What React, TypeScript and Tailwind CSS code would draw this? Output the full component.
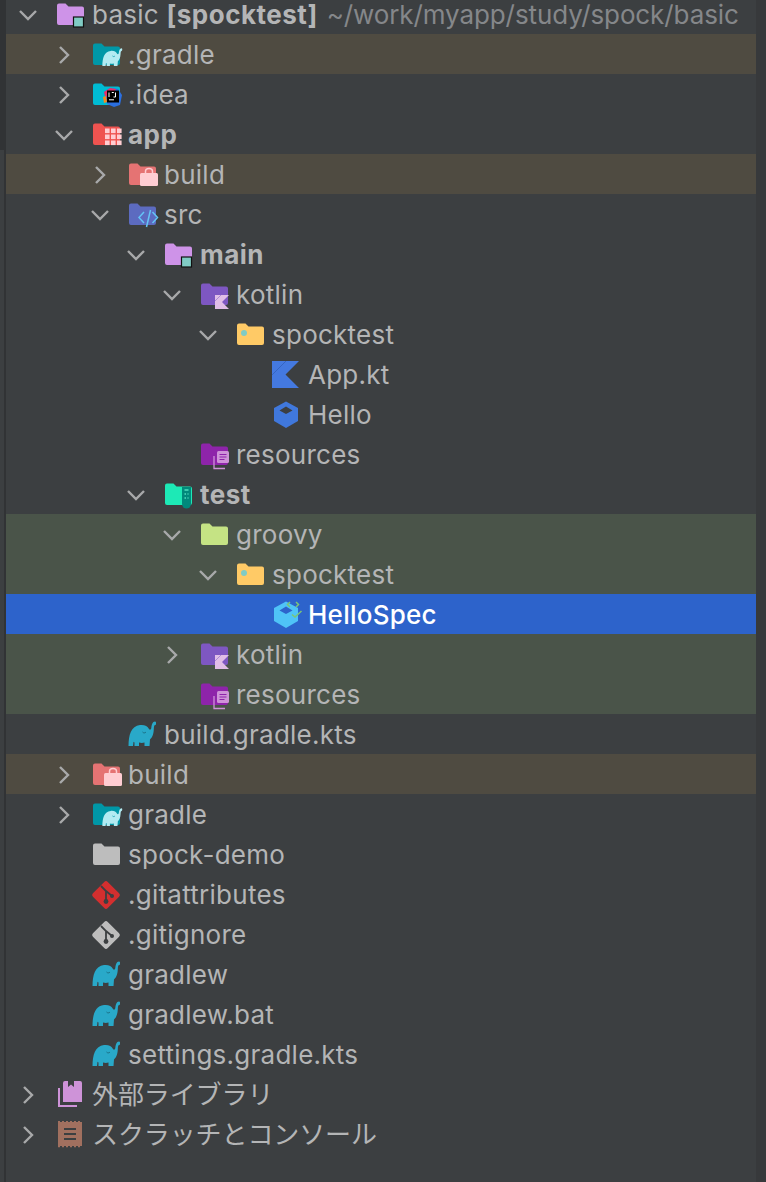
import type { ReactNode } from "react";

/* Project tool window tree */

const BG = "#3c3f41";
const FOLDER = "M1 4.5a2 2 0 0 1 2-2h6.5l3 3H26a2 2 0 0 1 2 2V22a2 2 0 0 1-2 2H3a2 2 0 0 1-2-2z";
const ELEPHANT =
  "M.5 25C.5 14 3 5 12 4c4.500-.5 7.500 1 9 4 .8 1.200 2 .8 2.300-1 .4-3.500 1.200-6.500 3.700-6.500 1.500 0 1.500 3 .3 3.500-1.300 0-1.300 1.500-1.500 4.500-.3 5.500-2 8.500-3.800 10l-.5 6.500h-5v-3.500c-2 .5-3.500.5-5.500 0V25H6.500v-3.500l-1-.7-.5 4.200z";

function Folder({ color, children }: { color: string; children?: ReactNode }) {
  return (
    <svg width="28" height="28" viewBox="0 0 28 28" className="overflow-visible">
      <path d={FOLDER} fill={color} />
      {children}
    </svg>
  );
}

function Elephant({ color, eye }: { color: string; eye: string }) {
  return (
    <>
      <path d={ELEPHANT} fill={color} />
      <path d="M14.500 11c1 1.200 2.500 1.200 3.500 0" fill="none" stroke={eye} strokeWidth="1" />
    </>
  );
}

function ModuleBadge() {
  return <rect x="17.5" y="16" width="10" height="10" fill="#80cbc4" stroke="#111" strokeWidth="1.2" />;
}

function KotlinBadge() {
  return (
    <>
      <path d="M15 14h14l-7 7 7 7H15z" fill="#e1bee7" />
      <path d="M21 14l-6 6" stroke="#9575cd" strokeWidth=".7" />
    </>
  );
}

function DocsBadge() {
  return (
    <>
      <path d="M14 15v12.5h11" fill="none" stroke="#ce93d8" strokeWidth="1.3" />
      <rect x="17" y="10" width="12" height="12" rx="1.5" fill="#ce93d8" />
      <path d="M19.5 13.5h7M19.5 16h7M19.5 18.5h5" stroke="#8e24aa" strokeWidth="1.2" />
    </>
  );
}

function BagBadge() {
  return (
    <>
      <path d="M17.5 12V10.5a3.5 3 0 0 1 7 0V12" fill="none" stroke="#ffcdd2" strokeWidth="1.5" />
      <rect x="12" y="12" width="18" height="13" rx="1.5" fill="#ffcdd2" />
    </>
  );
}

function Cube({ body, hole, children }: { body: string; hole: string; children?: ReactNode }) {
  return (
    <svg width="28" height="28" viewBox="0 0 28 28" className="overflow-visible">
      <path d="M14 .5L26 7v13l-12 7-12-7V7z" fill={body} />
      <path d="M14 5.5l6.500 4-6.500 3.500-6.500-3.500z" fill={hole} />
      {children}
    </svg>
  );
}

function GitIcon({ color }: { color: string }) {
  return (
    <svg width="28" height="28" viewBox="0 0 28 28" className="overflow-visible">
      <rect x="3.500" y="3.500" width="21" height="21" rx="2.500" fill={color} transform="rotate(45 14 14)" />
      <path d="M9 5l5 5v10M14 10l6 5" fill="none" stroke={BG} strokeWidth="1.8" />
      <circle cx="14" cy="20.5" r="2.4" fill={BG} />
      <circle cx="20" cy="15" r="2" fill={BG} />
    </svg>
  );
}

const ICONS: Record<string, ReactNode> = {
  root: <Folder color="#ce93e8"><ModuleBadge /></Folder>,
  gradleDir: (
    <Folder color="#0097a7">
      <g transform="translate(10 7) scale(.72)"><Elephant color="#b2ebf2" eye="#0097a7" /></g>
    </Folder>
  ),
  idea: (
    <Folder color="#00bcd4">
      <path d="M12 11l6-4 8 1 4 6-2 10-6 2-7-3z" fill="#2b6fe0" />
      <path d="M12 11l6-4 6 1-5 9-6-2z" fill="#e8326a" />
      <path d="M11 16l3-1 1 6-3 1z" fill="#f58a1f" />
      <rect x="15" y="9.500" width="12" height="12" fill="#000" />
      <path d="M17 11.500v4.500M19.800 11.500h2M23.500 11.500v4.500h-2M17 18.800h5" stroke="#fff" strokeWidth="1" fill="none" />
    </Folder>
  ),
  app: (
    <Folder color="#ef5350">
      <g fill="#ffcdd2">
        {[0, 1, 2].flatMap((r) =>
          [0, 1, 2].map((c) => <rect key={`${r}${c}`} x={13 + c * 6} y={7.5 + r * 6} width="4.6" height="4.6" />),
        )}
      </g>
    </Folder>
  ),
  build: <Folder color="#e57373"><BagBadge /></Folder>,
  src: (
    <Folder color="#5c6bc0">
      <path d="M16 11l-5 5.500 5 5.500M24.500 11l5 5.500-5 5.500M22.500 9l-4 17" fill="none" stroke="#64c4f6" strokeWidth="1.5" />
    </Folder>
  ),
  kotlin: <Folder color="#7e57c2"><KotlinBadge /></Folder>,
  pkg: <Folder color="#ffca66"><circle cx="8" cy="12" r="3" fill="#80cbc4" /></Folder>,
  kt: (
    <svg width="28" height="28" viewBox="0 0 28 28">
      <path d="M0 0h27L13.500 13.500 27 27H0z" fill="#4479e0" />
      <path d="M14 0L0 14" stroke="#2f5db5" strokeWidth=".7" />
    </svg>
  ),
  cls: <Cube body="#4078dc" hole={BG} />,
  res: <Folder color="#8e24aa"><DocsBadge /></Folder>,
  test: (
    <Folder color="#1de9b6">
      <path d="M18 6h9v17a4.500 4.500 0 0 1-9 0z" fill="#00897b" />
      <path d="M20.500 9h4M20.500 13h1.500M23.500 13h1M20.500 17h1.500M23.500 17h1" stroke="#4fe0c0" strokeWidth="1.4" />
    </Folder>
  ),
  groovy: <Folder color="#c5e384" />,
  spec: (
    <Cube body="#4fc3f7" hole="#2d63cb">
      <path d="M18 1l-2.500 2.500L18 6M24 1l2.500 2.500L24 6M20 13.500l3 2.500 6.500-6" fill="none" stroke="#7cc576" strokeWidth="1.5" />
    </Cube>
  ),
  plain: <Folder color="#bdbdbd" />,
  gitRed: <GitIcon color="#d32f2f" />,
  gitGray: <GitIcon color="#bdbdbd" />,
  gradle: (
    <svg width="28" height="28" viewBox="0 0 28 28">
      <Elephant color="#29a9c9" eye="#1b6f85" />
    </svg>
  ),
  libs: (
    <svg width="28" height="28" viewBox="0 0 28 28">
      <path d="M7 2a2 2 0 0 1 2-2h3v6l3-2.500L18 6V0h6a2 2 0 0 1 2 2v19H7z" fill="#ce93d8" />
      <path d="M3 7v18h18" fill="none" stroke="#ce93d8" strokeWidth="2" />
    </svg>
  ),
  scratch: (
    <svg width="28" height="28" viewBox="0 0 28 28">
      <rect x="2" y="1" width="24" height="24" fill="#a1705f" />
      <path d="M2 .5h24M2 25.500h24" stroke="#a1705f" strokeWidth="1.5" strokeDasharray="2 2" />
      <path d="M8 8h12M8 13h12M8 18h12" stroke={BG} strokeWidth="2" />
    </svg>
  ),
};

type Row = {
  name: string;
  icon: string;
  depth: number;
  open?: boolean;
  bold?: boolean;
  bg?: string;
};

const BROWN = "bg-[#4f4b41]";
const GREEN = "bg-[#4a5449]";

const ROWS: Row[] = [
  { name: ".gradle", icon: "gradleDir", depth: 1, open: false, bg: BROWN },
  { name: ".idea", icon: "idea", depth: 1, open: false },
  { name: "app", icon: "app", depth: 1, open: true, bold: true },
  { name: "build", icon: "build", depth: 2, open: false, bg: BROWN },
  { name: "src", icon: "src", depth: 2, open: true },
  { name: "main", icon: "root", depth: 3, open: true, bold: true },
  { name: "kotlin", icon: "kotlin", depth: 4, open: true },
  { name: "spocktest", icon: "pkg", depth: 5, open: true },
  { name: "App.kt", icon: "kt", depth: 6 },
  { name: "Hello", icon: "cls", depth: 6 },
  { name: "resources", icon: "res", depth: 4 },
  { name: "test", icon: "test", depth: 3, open: true, bold: true },
  { name: "groovy", icon: "groovy", depth: 4, open: true, bg: GREEN },
  { name: "spocktest", icon: "pkg", depth: 5, open: true, bg: GREEN },
  { name: "HelloSpec", icon: "spec", depth: 6, bg: "bg-[#2d63cb] text-white font-medium" },
  { name: "kotlin", icon: "kotlin", depth: 4, open: false, bg: GREEN },
  { name: "resources", icon: "res", depth: 4, bg: GREEN },
  { name: "build.gradle.kts", icon: "gradle", depth: 2 },
  { name: "build", icon: "build", depth: 1, open: false, bg: BROWN },
  { name: "gradle", icon: "gradleDir", depth: 1, open: false },
  { name: "spock-demo", icon: "plain", depth: 1 },
  { name: ".gitattributes", icon: "gitRed", depth: 1 },
  { name: ".gitignore", icon: "gitGray", depth: 1 },
  { name: "gradlew", icon: "gradle", depth: 1 },
  { name: "gradlew.bat", icon: "gradle", depth: 1 },
  { name: "settings.gradle.kts", icon: "gradle", depth: 1 },
  { name: "外部ライブラリ", icon: "libs", depth: 0, open: false },
  { name: "スクラッチとコンソール", icon: "scratch", depth: 0, open: false },
];

const INDENT = ["pl-[10px]", "pl-[46px]", "pl-[82px]", "pl-[118px]", "pl-[154px]", "pl-[190px]", "pl-[226px]"];

function Chevron({ open }: { open?: boolean }) {
  if (open === undefined) return null;
  return (
    <svg width="24" height="24" viewBox="0 0 24 24">
      <path d={open ? "M4 8l8 8 8-8" : "M8 4l8 8-8 8"} fill="none" stroke="#a8a9aa" strokeWidth="2.4" />
    </svg>
  );
}

function TreeRow({ row }: { row: Row }) {
  return (
    <div className={`flex h-10 items-center pt-[2px] ${INDENT[row.depth]} ${row.bg ?? ""} ${row.bold ? "font-bold tracking-[0.5px]" : ""}`}>
      <div className="flex w-10 shrink-0 items-center">
        <Chevron open={row.open} />
      </div>
      <div className="mr-2 h-7 w-7 shrink-0">{ICONS[row.icon]}</div>
      <span className={`whitespace-nowrap pb-[2px] ${row.depth === 0 ? "tracking-[-0.1px]" : ""}`}>{row.name}</span>
    </div>
  );
}

export default function App() {
  return (
    <div className="flex h-[1182px] overflow-hidden bg-[#3c3f41] font-['Inter','Noto_Sans_CJK_JP',sans-serif] text-[26px] tracking-[0.25px] text-[#b4b5b6]">
      <div className="flex w-[6px] shrink-0 flex-col">
        <div className="h-[150px] bg-[#313335]" />
        <div className="flex-1 border-r-2 border-[#313335]" />
      </div>
      <div className="min-w-0 flex-1">
        <div className="flex h-[34px] items-center pb-1 pl-[10px]">
          <div className="flex w-10 shrink-0 items-center">
            <Chevron open />
          </div>
          <div className="mr-2 h-7 w-7 shrink-0">{ICONS.root}</div>
          <span className="whitespace-nowrap leading-[30px]">
            basic <span className="font-bold tracking-[0.5px]">[spocktest]</span>
            <span className="ml-[9px] tracking-[-0.1px] text-[#85878a]">~/work/myapp/study/spock/basic</span>
          </span>
        </div>
        {ROWS.map((row, i) => (
          <TreeRow key={i} row={row} />
        ))}
      </div>
      <div className="w-[10px] shrink-0 bg-[#37393b]" />
    </div>
  );
}
